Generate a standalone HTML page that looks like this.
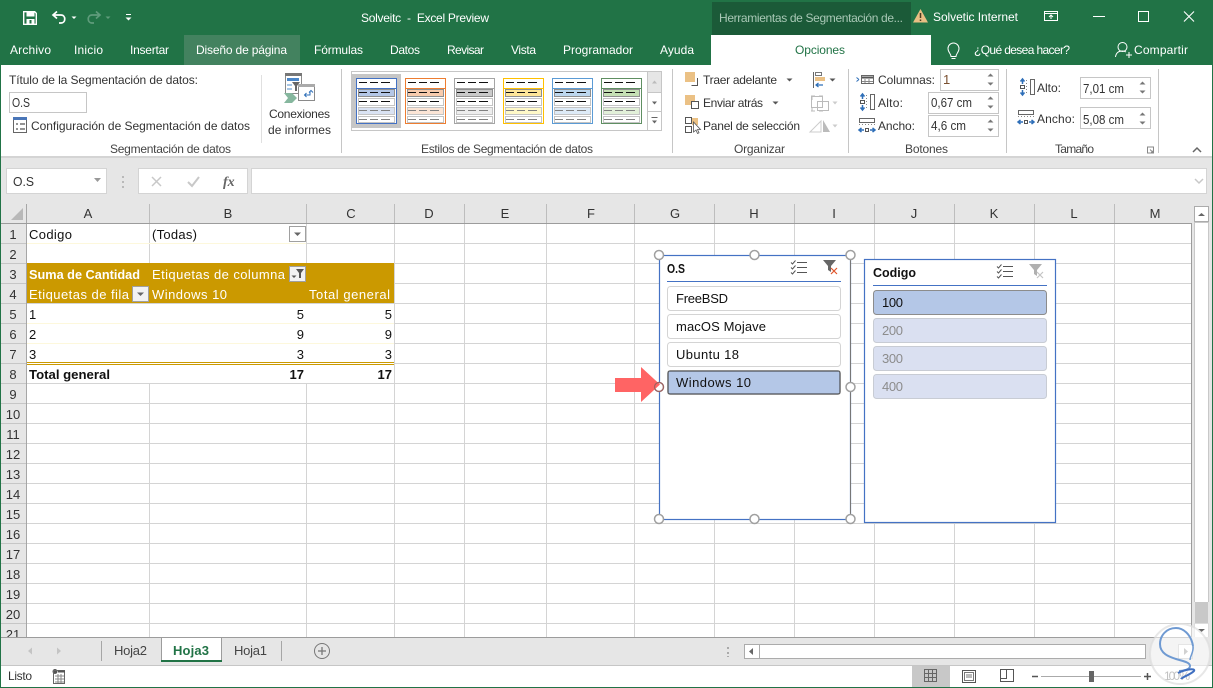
<!DOCTYPE html>
<html lang="es"><head><meta charset="utf-8"><title>Solveitc - Excel Preview</title>
<style>
html,body{margin:0;padding:0;background:#e6e6e6;overflow:hidden}
svg{display:block}
text{font-family:"Liberation Sans",sans-serif;font-size:12px;fill:#333}
.w text,text.w{fill:#fff}
.k text{fill:#111;font-size:13px}
.g text{fill:#444}
.c text{text-anchor:middle;fill:#333;font-size:13px}
.r text{text-anchor:end;fill:#111;font-size:13px}
.p text{fill:#fff;font-size:13px}
.m text{font-size:13px}
text.m{font-size:13px}
.b{font-weight:bold}
.s{fill:none;stroke:#555;stroke-width:1}
</style></head><body>
<svg xmlns="http://www.w3.org/2000/svg" width="1213" height="688" viewBox="0 0 1213 688">
<defs>
<g id="th">
<rect x="356.5" y="78.5" width="40" height="45" fill="#fff" style="stroke:var(--a)"/>
<path d="M357 88.5h39" style="stroke:var(--a)"/>
<rect x="358.5" y="89.5" width="36" height="7" style="fill:var(--b)" stroke="#8f8f8f"/>
<rect x="358.5" y="98.5" width="36" height="7" fill="#fff" stroke="#c4c4c4"/>
<rect x="358.5" y="107.5" width="36" height="7" style="fill:var(--c)" stroke="#c4c4c4"/>
<rect x="358.5" y="116.5" width="36" height="6" fill="#fff" stroke="#c4c4c4"/>
<path d="M359 82.5h8m3 0h8m3 0h9M359 92.5h8m3 0h8m3 0h9M359 101.5h8m3 0h8m3 0h9" stroke="#111"/>
<path d="M359 110.5h8m3 0h8m3 0h9M359 119.5h8m3 0h8m3 0h9" stroke="#808080"/>
</g>
<g id="ms"><path d="M0 2.5l1.5 1.5 3-3.5M0 7.5l1.5 1.5 3-3.5M0 12.5l1.5 1.5 3-3.5" fill="none" stroke="#555"/><path d="M6 2.5h10M6 7.5h10M6 12.5h10" stroke="#555"/></g>
</defs>

<!-- base -->
<rect width="1213" height="688" fill="#e6e6e6"/>
<rect width="1213" height="65" fill="#217346"/>
<rect x="712" y="2" width="199" height="33" fill="#1b5a38"/>
<rect x="184" y="35" width="116" height="30" fill="#43825f"/>
<rect x="711" y="35" width="220" height="30" fill="#fff"/>
<rect x="1" y="65" width="1211" height="91" fill="#fff"/>
<rect x="1" y="156" width="1211" height="2" fill="#d4d4d4"/>
<rect x="0" y="65" width="1" height="623" fill="#217346"/>
<rect x="1212" y="65" width="1" height="623" fill="#217346"/>

<!-- quick access -->
<path d="M23.7 11.7h11l1.6 1.6v11h-12.600z" fill="none" stroke="#fff" stroke-width="1.400"/>
<rect x="26.500" y="12" width="8" height="4.500" fill="#fff"/>
<rect x="26.500" y="19" width="8" height="5" fill="#fff"/>
<rect x="29.500" y="20" width="2" height="3.500" fill="#217346"/>
<path d="M57 11.500l-4 3.500 4 3.500M53 15h8c5 0 5 8 0 8h-2" fill="none" stroke="#fff" stroke-width="1.700"/>
<path d="M71.500 16.500h5l-2.500 2.500z" fill="#fff"/>
<path d="M96 11.500l4 3.500-4 3.500M100 15h-8c-5 0-5 8 0 8h2" fill="none" stroke="#5f9c7b" stroke-width="1.700"/>
<path d="M105.500 16.500h5l-2.500 2.500z" fill="#5f9c7b"/>
<path d="M126 14.500h5" stroke="#fff"/><path d="M125.500 17.500h6l-3 3z" fill="#fff"/>

<!-- title bar text -->
<text class="w" x="361" y="22" textLength="128">Solveitc&#160; -&#160; Excel Preview</text>
<text x="719" y="22" textLength="184" style="fill:#a9c8b6">Herramientas de Segmentación de...</text>
<path d="M920.500 9l7.500 13.500h-15z" fill="#e8bf84"/><path d="M920.500 13v5" stroke="#4a3a20" stroke-width="1.500"/><path d="M920.500 19.500v1.500" stroke="#4a3a20" stroke-width="1.500"/>
<text class="w" x="933" y="21" textLength="85">Solvetic Internet</text>
<rect x="1044.500" y="11.500" width="13" height="9" fill="none" stroke="#fff"/><path d="M1045 13.500h12" stroke="#fff"/><path d="M1051 19v-3.500m-2 1.500l2-2 2 2" fill="none" stroke="#fff"/>
<path d="M1093 16.500h12" stroke="#fff"/>
<rect x="1138.500" y="11.500" width="10" height="10" fill="none" stroke="#fff"/>
<path d="M1184 11.500l10 10m0-10l-10 10" stroke="#fff" stroke-width="1.100"/>

<!-- tabs -->
<g class="w">
<text x="10" y="54" textLength="41">Archivo</text>
<text x="74" y="54" textLength="29">Inicio</text>
<text x="130" y="54" textLength="39">Insertar</text>
<text x="196" y="54" textLength="91">Diseño de página</text>
<text x="314" y="54" textLength="49">Fórmulas</text>
<text x="390" y="54" textLength="30">Datos</text>
<text x="447" y="54" textLength="37">Revisar</text>
<text x="511" y="54" textLength="25">Vista</text>
<text x="563" y="54" textLength="70">Programador</text>
<text x="660" y="54" textLength="34">Ayuda</text>
<text x="974" y="54" textLength="96">¿Qué desea hacer?</text>
<text x="1134" y="54" textLength="54">Compartir</text>
</g>
<text x="795" y="54" textLength="50" style="fill:#217346">Opciones</text>
<path d="M951 56.500c0-3-3-4-3-8a5.500 5.500 0 0 1 11 0c0 4-3 5-3 8zM951.500 58.500h4" fill="none" stroke="#fff"/>
<circle cx="1122.500" cy="47" r="4.500" fill="none" stroke="#fff"/><path d="M1115.500 57c.5-4 3-6 7-6 1.500 0 2.500.3 3.500 1M1129 52v6m-3-3h6" fill="none" stroke="#fff"/>

<!-- ribbon: group 1 -->
<text x="9" y="84" textLength="189">Título de la Segmentación de datos:</text>
<rect x="9.500" y="92.500" width="77" height="20" fill="#fff" stroke="#c6c6c6"/>
<text x="12" y="107" textLength="18" lengthAdjust="spacingAndGlyphs" class="m">O.S</text>
<rect x="13.500" y="117.500" width="13" height="15" fill="#fff" stroke="#666"/><rect x="13" y="117" width="14" height="3" fill="#4a76b8"/>
<path d="M16 124h2M20 124h5M16 129h2M20 129h5" stroke="#555" stroke-width="1.200"/>
<text x="31" y="130" textLength="219">Configuración de Segmentación de datos</text>
<g class="g"><text x="110" y="153" textLength="121">Segmentación de datos</text></g>
<path d="M261.500 75v68" stroke="#e0e0e0"/>
<path d="M341.500 69v84M672.500 69v84M848.500 69v84M1006.500 69v84M1158.500 69v84" stroke="#c6c6c6"/>
<!-- conexiones -->
<rect x="285.500" y="73.500" width="16" height="20" fill="#fff" stroke="#8a8a8a"/><rect x="285" y="73" width="17" height="3" fill="#777"/>
<rect x="287" y="78" width="12" height="3" fill="#4a86c8"/><path d="M292 82h8l-3 4v5h-2v-5z" fill="#666"/><rect x="287" y="84" width="5" height="2" fill="#a8c6e4"/><rect x="287" y="88" width="5" height="2" fill="#a8c6e4"/>
<rect x="298.500" y="84.500" width="16" height="16" fill="#fff" stroke="#8a8a8a"/><rect x="298" y="84" width="17" height="3" fill="#aaa"/>
<path d="M310 91v4h-5m1.500-2l-2 2 2 2M309 92.500l2-2 2 2" fill="none" stroke="#2f6fb8"/>
<path d="M284 93h8l5 5-5 5h-8l4-5z" fill="#86b79e"/>
<text x="269" y="118" textLength="61">Conexiones</text>
<text x="268" y="134" textLength="63">de informes</text>

<!-- gallery -->
<rect x="351.500" y="71.500" width="310" height="59" fill="#fff" stroke="#c6c6c6"/>
<rect x="352" y="74" width="49" height="54" fill="#c6c6c6"/>
<use href="#th" style="--a:#4472c4;--b:#b4c7e7;--c:#dae3f3"/>
<use href="#th" x="49" style="--a:#ed7d31;--b:#f8cbad;--c:#fbe5d6"/>
<use href="#th" x="98" style="--a:#a5a5a5;--b:#c9c9c9;--c:#ededed"/>
<use href="#th" x="147" style="--a:#ffc000;--b:#ffe699;--c:#fff9c8"/>
<use href="#th" x="196" style="--a:#5b9bd5;--b:#bdd7ee;--c:#deebf7"/>
<use href="#th" x="245" style="--a:#5f8f62;--b:#c5e0b4;--c:#e2f0d9"/>
<rect x="647.500" y="71.500" width="14" height="21" fill="#e6e6e6" stroke="#c6c6c6"/>
<rect x="647.500" y="92.500" width="14" height="19" fill="#fff" stroke="#c6c6c6"/>
<rect x="647.500" y="111.500" width="14" height="19" fill="#fff" stroke="#c6c6c6"/>
<path d="M652 83.500h5l-2.500-3z" fill="#bbb"/><path d="M652 101.500h5l-2.500 3z" fill="#666"/><path d="M651.500 117.500h6" stroke="#666"/><path d="M652 120.500h5l-2.500 3z" fill="#666"/>
<g class="g"><text x="421" y="153" textLength="172">Estilos de Segmentación de datos</text></g>

<!-- organizar -->
<rect x="685" y="72" width="10" height="10" fill="#ebc185"/><path d="M696 78.500h-0M697.500 78v7.500h-6" fill="none" stroke="#555"/>
<text x="703" y="84" textLength="74">Traer adelante</text><path d="M786.500 78.500h6l-3 3z" fill="#555"/>
<rect x="685" y="95" width="10" height="10" fill="#ebc185"/><rect x="691.500" y="101.500" width="7" height="7" fill="#fff" stroke="#555"/>
<text x="703" y="107" textLength="60">Enviar atrás</text><path d="M772.500 101.500h6l-3 3z" fill="#555"/>
<rect x="685.500" y="117.500" width="6" height="6" fill="none" stroke="#555"/><rect x="685.500" y="126.500" width="6" height="6" fill="none" stroke="#555"/><rect x="692" y="118" width="6" height="7" fill="#ebc185"/>
<path d="M693.500 122v10l2.500-2 1.500 3.500 1.500-.7-1.500-3.300h3z" fill="#fff" stroke="#555" stroke-width=".8"/>
<text x="703" y="130" textLength="97">Panel de selección</text>
<g class="g"><text x="734" y="153" textLength="51">Organizar</text></g>
<path d="M813.500 72v16" stroke="#666"/><rect x="815.500" y="72.500" width="6" height="3" fill="#fff" stroke="#777"/><rect x="815" y="77" width="10" height="4" fill="#ebc185"/><path d="M823 85h-7m2.500-2l-2.500 2 2.500 2" fill="none" stroke="#2f6fb8" stroke-width="1.200"/>
<path d="M829.500 78.500h6l-3 3z" fill="#555"/>
<path d="M811 96h4m4 0h4M811 111h4m4 0h4M812 96v4m0 7v4M833 96" stroke="#bbb"/><rect x="811.500" y="96.500" width="11" height="11" fill="none" stroke="#bbb"/><rect x="817.500" y="101.500" width="11" height="9" fill="none" stroke="#bbb"/>
<path d="M832.500 101.500h5l-2.500 3z" fill="#ccc"/>
<path d="M810 132l11-11v11z" fill="none" stroke="#ccc"/><path d="M823 120l7 12h-7z" fill="#bbb"/><path d="M832.500 124.500h5l-2.500 3z" fill="#ccc"/>

<!-- botones -->
<path d="M859 79.500l-2.500-2m0 4l2.500-2M875 79.500" fill="none" stroke="#2f6fb8"/><rect x="861.500" y="75.500" width="12" height="8" fill="#fff" stroke="#666"/><path d="M862 77.500h11" stroke="#555" stroke-width="2"/><path d="M865 79v4M869 79v4M862 81.500h11" stroke="#888"/>
<text x="878" y="84" textLength="57">Columnas:</text>
<rect x="940.500" y="69.500" width="58" height="21" fill="#fff" stroke="#c6c6c6"/><text x="943" y="84" class="m" style="fill:#7a5030">1</text>
<rect x="928.500" y="92.500" width="70" height="21" fill="#fff" stroke="#c6c6c6"/><text x="931" y="107" textLength="41" lengthAdjust="spacingAndGlyphs" class="m">0,67 cm</text>
<rect x="928.500" y="115.500" width="70" height="21" fill="#fff" stroke="#c6c6c6"/><text x="931" y="130" textLength="35" lengthAdjust="spacingAndGlyphs" class="m">4,6 cm</text>
<path d="M987.500 76.500h6l-3-3zM987.500 82.500h6l-3 3zM987.500 99.500h6l-3-3zM987.500 105.500h6l-3 3zM987.500 122.500h6l-3-3zM987.500 128.500h6l-3 3z" fill="#777"/>
<g id="alto"><rect x="870.500" y="94.500" width="4" height="15" fill="#fff" stroke="#666"/><path d="M862.500 94v5m-2-2.500l2-2.500 2 2.500M862.500 110v-5m-2 2.500l2 2.500 2-2.500" fill="none" stroke="#2f6fb8" stroke-width="1.500"/><rect x="860.500" y="100.500" width="4" height="3" fill="none" stroke="#555"/><path d="M866.500 95v15" stroke="#888" stroke-dasharray="1 2"/></g>
<text x="878" y="107" textLength="25">Alto:</text>
<g id="ancho"><rect x="859.500" y="118.500" width="15" height="4" fill="#fff" stroke="#666"/><path d="M859 124.500h16" stroke="#888" stroke-dasharray="1 2"/><path d="M859 130h5m-2.500-2l-2.500 2 2.500 2M875 130h-5m2.500-2l2.500 2-2.500 2" fill="none" stroke="#2f6fb8" stroke-width="1.500"/><rect x="865.500" y="128.500" width="3" height="3" fill="none" stroke="#555"/></g>
<text x="878" y="130" textLength="37">Ancho:</text>
<g class="g"><text x="905" y="153" textLength="43">Botones</text></g>

<!-- tamano -->
<use href="#alto" x="160" y="-15"/>
<text x="1037" y="92" textLength="24">Alto:</text>
<rect x="1080.500" y="77.500" width="70" height="21" fill="#fff" stroke="#c6c6c6"/><text x="1083" y="93" textLength="41" lengthAdjust="spacingAndGlyphs" class="m">7,01 cm</text>
<use href="#ancho" x="159" y="-8"/>
<text x="1037" y="123" textLength="38">Ancho:</text>
<rect x="1080.500" y="107.500" width="70" height="21" fill="#fff" stroke="#c6c6c6"/><text x="1083" y="124" textLength="41" lengthAdjust="spacingAndGlyphs" class="m">5,08 cm</text>
<path d="M1139.500 84.500h6l-3-3zM1139.500 90.500h6l-3 3zM1139.500 115.500h6l-3-3zM1139.500 121.500h6l-3 3z" fill="#777"/>
<g class="g"><text x="1055" y="153" textLength="39">Tamaño</text></g>
<path d="M1147.500 147h6v6h-6zM1150 149.500l3 3m-2 0h2v-2" fill="none" stroke="#888"/>
<path d="M1193 152l4-4 4 4" fill="none" stroke="#666" stroke-width="1.500"/>

<!-- formula bar -->
<rect x="6.500" y="168.500" width="100" height="25" fill="#fff" stroke="#d4d4d4"/>
<text x="13" y="186" textLength="21" lengthAdjust="spacingAndGlyphs" class="m">O.S</text>
<path d="M94 178h7l-3.500 4z" fill="#999"/>
<path d="M123 176v2m0 3v2m0 3v2" stroke="#aaa" stroke-width="1.500"/>
<rect x="138.500" y="168.500" width="109" height="25" fill="#fff" stroke="#d4d4d4"/>
<rect x="251.500" y="168.500" width="955" height="25" fill="#fff" stroke="#d4d4d4"/>
<path d="M152 177l9 9m0-9l-9 9" stroke="#c8c8c8" stroke-width="1.500"/>
<path d="M188 182l4 4 7-9" fill="none" stroke="#c8c8c8" stroke-width="2"/>
<text x="223" y="186" style="font-family:'Liberation Serif',serif;font-style:italic;font-weight:bold;font-size:14px;fill:#666">fx</text>
<path d="M1195 179l4 4 4-4" fill="none" stroke="#c8c8c8" stroke-width="1.500"/>

<!-- grid -->
<rect x="27" y="224" width="1164" height="413" fill="#fff"/>
<path d="M11 220h12v-12z" fill="#b8b8b8"/>
<path d="M149.500 224V637M306.500 224V637M394.500 224V637M464.500 224V637M546.500 224V637M634.500 224V637M714.500 224V637M794.500 224V637M874.500 224V637M954.500 224V637M1034.500 224V637M1114.500 224V637" stroke="#d4d4d4"/>
<path d="M27 243.500H1191M27 263.500H1191M27 283.500H1191M27 303.500H1191M27 323.500H1191M27 343.500H1191M27 363.500H1191M27 383.500H1191M27 403.500H1191M27 423.500H1191M27 443.500H1191M27 463.500H1191M27 483.500H1191M27 503.500H1191M27 523.500H1191M27 543.500H1191M27 563.500H1191M27 583.500H1191M27 603.500H1191M27 623.500H1191" stroke="#d4d4d4"/>
<path d="M1 243.500H26M1 263.500H26M1 283.500H26M1 303.500H26M1 323.500H26M1 343.500H26M1 363.500H26M1 383.500H26M1 403.500H26M1 423.500H26M1 443.500H26M1 463.500H26M1 483.500H26M1 503.500H26M1 523.500H26M1 543.500H26M1 563.500H26M1 583.500H26M1 603.500H26M1 623.500H26" stroke="#c6c6c6"/>
<path d="M149.500 204V223M306.500 204V223M394.500 204V223M464.500 204V223M546.500 204V223M634.500 204V223M714.500 204V223M794.500 204V223M874.500 204V223M954.500 204V223M1034.500 204V223M1114.500 204V223" stroke="#bdbdbd"/>
<path d="M26.500 204V637" stroke="#a6a6a6"/>
<path d="M1 223.500H1191" stroke="#9c9c9c"/>
<path d="M1191.500 223V637" stroke="#9c9c9c"/>
<g class="c">
<text x="88" y="218">A</text><text x="228" y="218">B</text><text x="351" y="218">C</text><text x="429" y="218">D</text><text x="505" y="218">E</text><text x="591" y="218">F</text><text x="675" y="218">G</text><text x="754" y="218">H</text><text x="834" y="218">I</text><text x="914" y="218">J</text><text x="994" y="218">K</text><text x="1074" y="218">L</text><text x="1155" y="218">M</text>
<text x="13" y="239">1</text><text x="13" y="259">2</text><text x="13" y="279">3</text><text x="13" y="299">4</text><text x="13" y="319">5</text><text x="13" y="339">6</text><text x="13" y="359">7</text><text x="13" y="379">8</text><text x="13" y="399">9</text><text x="13" y="419">10</text><text x="13" y="439">11</text><text x="13" y="459">12</text><text x="13" y="479">13</text><text x="13" y="499">14</text><text x="13" y="519">15</text><text x="13" y="539">16</text><text x="13" y="559">17</text><text x="13" y="579">18</text><text x="13" y="599">19</text><text x="13" y="619">20</text><text x="13" y="639">21</text>
</g>
<!-- pivot -->
<path d="M27 243.500H306" stroke="#fdf8dc"/>
<rect x="27" y="304" width="367" height="79" fill="#fff"/>
<path d="M27 323.500H394M27 343.500H394" stroke="#fdf8dc"/>
<rect x="27" y="263" width="367" height="40" fill="#cb9900"/>
<path d="M27 362.500H394M27 364.500H394" stroke="#cb9900"/>
<g class="k">
<text x="29" y="239" textLength="43">Codigo</text>
<text x="152" y="239" textLength="45">(Todas)</text>
<text x="29" y="319">1</text><text x="29" y="339">2</text><text x="29" y="359">3</text>
<text x="29" y="379" class="b" textLength="81" lengthAdjust="spacingAndGlyphs">Total general</text>
</g>
<g class="r">
<text x="304" y="319">5</text><text x="392" y="319">5</text>
<text x="304" y="339">9</text><text x="392" y="339">9</text>
<text x="304" y="359">3</text><text x="392" y="359">3</text>
<text x="304" y="379" class="b">17</text><text x="392" y="379" class="b">17</text>
</g>
<g class="p">
<text x="29" y="279" class="b" textLength="111" lengthAdjust="spacingAndGlyphs">Suma de Cantidad</text>
<text x="152" y="279" textLength="133">Etiquetas de columna</text>
<text x="29" y="299" textLength="100">Etiquetas de fila</text>
<text x="152" y="299" textLength="75">Windows 10</text>
<text x="309" y="299" textLength="81">Total general</text>
</g>
<rect x="289.500" y="226.500" width="16" height="15" fill="#fff" stroke="#a0a0a0"/><path d="M294 232.500h7l-3.500 3.500z" fill="#666"/>
<rect x="289.500" y="266.500" width="16" height="15" fill="#f2f2f2" stroke="#a0a0a0"/><path d="M296 269h8l-3 4v5h-2v-5z" fill="#555"/><path d="M291.500 275.500h5l-2.500 2.500z" fill="#555"/>
<rect x="132.500" y="286.500" width="16" height="15" fill="#f2f2f2" stroke="#a0a0a0"/><path d="M137 292.500h7l-3.500 3.500z" fill="#666"/>

<!-- slicer O.S -->
<rect x="659.500" y="255.500" width="191" height="264" fill="#fff" stroke="#4472c4" stroke-width="1.200"/>
<path d="M850.500 256V519" stroke="#777"/>
<text x="667" y="273" class="b m" textLength="18" lengthAdjust="spacingAndGlyphs" style="fill:#111">O.S</text>
<path d="M667 281.500h174" stroke="#4472c4"/>
<use href="#ms" x="791" y="260"/>
<path d="M823 260h13l-5 6v6l-3-2v-4z" fill="#666"/><path d="M831 268l6 6m0-6l-6 6" stroke="#e0562c" stroke-width="1.200"/>
<g fill="#fff" stroke="#d4d4d4">
<rect x="667.500" y="286.500" width="173" height="24" rx="3"/>
<rect x="667.500" y="314.500" width="173" height="24" rx="3"/>
<rect x="667.500" y="342.500" width="173" height="24" rx="3"/>
</g>
<rect x="667.500" y="370.500" width="173" height="24" rx="3" fill="#b4c7e7" stroke="#8c8c8c"/>
<rect x="668.500" y="371.500" width="171" height="22" fill="none" stroke="#333" stroke-dasharray="1 1"/>
<g class="k">
<text x="676" y="303" textLength="52">FreeBSD</text>
<text x="676" y="331" textLength="90">macOS Mojave</text>
<text x="676" y="359" textLength="63">Ubuntu 18</text>
<text x="676" y="387" textLength="75">Windows 10</text>
</g>
<g fill="#fff" stroke="#a0a0a0" stroke-width="1.500">
<circle cx="659" cy="255" r="4.500"/><circle cx="754.500" cy="255" r="4.500"/><circle cx="850.500" cy="255" r="4.500"/>
<circle cx="659" cy="387" r="4.500"/><circle cx="850.500" cy="387" r="4.500"/>
<circle cx="659" cy="519" r="4.500"/><circle cx="754.500" cy="519" r="4.500"/><circle cx="850.500" cy="519" r="4.500"/>
</g>
<path d="M615 378h26v-11l19 17.500-19 17.500v-10h-26z" fill="#ff6464"/>
<circle cx="659" cy="387" r="4.500" fill="none" stroke="#a06060" stroke-width="1.200"/>

<!-- slicer Codigo -->
<rect x="864.500" y="259.500" width="191" height="263" fill="#fff" stroke="#4472c4" stroke-width="1.200"/>
<text x="873" y="277" class="b m" textLength="43" lengthAdjust="spacingAndGlyphs" style="fill:#111">Codigo</text>
<path d="M873 285.500h174" stroke="#4472c4"/>
<use href="#ms" x="997" y="264"/>
<path d="M1029 264h13l-5 6v6l-3-2v-4z" fill="#b0b0b0"/><path d="M1037 272l6 6m0-6l-6 6" stroke="#c4c4c4" stroke-width="1.200"/>
<rect x="873.500" y="290.500" width="173" height="24" rx="3" fill="#b4c7e7" stroke="#8c8c8c"/>
<g fill="#dae0f1" stroke="#c8ccd4">
<rect x="873.500" y="318.500" width="173" height="24" rx="3"/>
<rect x="873.500" y="346.500" width="173" height="24" rx="3"/>
<rect x="873.500" y="374.500" width="173" height="24" rx="3"/>
</g>
<text x="882" y="307" textLength="21" class="m" style="fill:#111">100</text>
<text x="882" y="335" textLength="21" class="m" style="fill:#8c8c8c">200</text>
<text x="882" y="363" textLength="21" class="m" style="fill:#8c8c8c">300</text>
<text x="882" y="391" textLength="21" class="m" style="fill:#8c8c8c">400</text>

<!-- v scrollbar -->
<rect x="1192" y="204" width="20" height="433" fill="#e6e6e6"/>
<rect x="1194.500" y="206.500" width="14" height="15" fill="#fff" stroke="#ababab"/>
<path d="M1198 216h7l-3.500-3z" fill="#666"/>
<rect x="1194" y="222" width="15" height="380" fill="#c8c8c8"/>
<rect x="1195" y="223" width="13" height="379" fill="#fff"/>
<rect x="1195" y="602" width="13" height="21" fill="#c8c8c8"/>
<rect x="1194.500" y="623.500" width="14" height="14" fill="#fff" stroke="#dcdcdc"/>
<path d="M1198 629h7l-3.500 3z" fill="#666"/>

<!-- sheet tabs -->
<rect x="1" y="637" width="1211" height="28" fill="#e6e6e6"/>
<path d="M1 637.500H1191" stroke="#9c9c9c"/>
<path d="M1 665.500H1212" stroke="#c6c6c6"/>
<rect x="1" y="666" width="1211" height="21" fill="#fff"/>
<rect x="0" y="687" width="1213" height="1" fill="#217346"/>
<path d="M32 647.500v7l-4-3.500zM57 647.500v7l4-3.500z" fill="#c4c4c4"/>
<path d="M101.500 641v20M281.500 641v20" stroke="#a6a6a6"/>
<rect x="161.500" y="637.500" width="60" height="23" fill="#fff" stroke="#9c9c9c"/>
<rect x="161" y="660" width="61" height="2" fill="#217346"/>
<text x="114" y="655" textLength="33" class="m" style="fill:#444">Hoja2</text>
<text x="173" y="655" class="b m" textLength="36" style="fill:#217346">Hoja3</text>
<text x="234" y="655" textLength="33" class="m" style="fill:#444">Hoja1</text>
<circle cx="322" cy="651" r="7.500" fill="none" stroke="#777"/><path d="M322 647v8m-4-4h8" stroke="#777" stroke-width="1.300"/>
<path d="M728 647v2m0 3v2m0 2v1" stroke="#aaa" stroke-width="2"/>
<rect x="744.500" y="644.500" width="15" height="14" fill="#fff" stroke="#ababab"/>
<rect x="759" y="644" width="387" height="15" fill="#ababab"/><rect x="760" y="645" width="385" height="13" fill="#fff"/>
<path d="M753 648v7l-4-3.500z" fill="#666"/>
<rect x="1178.500" y="644.500" width="14" height="14" fill="#fff" stroke="#c6c6c6"/><path d="M1184 648v7l4-3.500z" fill="#999"/>

<!-- status -->
<text x="8" y="680" textLength="24">Listo</text>
<circle cx="55" cy="671.500" r="2.500" fill="#555"/><rect x="53.500" y="670.500" width="11" height="13" fill="none" stroke="#666"/><path d="M58 671.500h7" stroke="#555" stroke-width="2"/><path d="M55 676h9M55 679h9M55 682h9M58 674v9M61 674v9" stroke="#888"/>
<rect x="912" y="666" width="38" height="21" fill="#c8c8c8"/>
<path d="M924.500 669.500h12v12h-12zM924.500 673.500h12M924.500 677.500h12M928.500 669.500v12M932.500 669.500v12" fill="none" stroke="#666"/>
<rect x="962.500" y="670.500" width="13" height="12" fill="none" stroke="#555"/><rect x="964.500" y="672.500" width="9" height="8" fill="none" stroke="#777"/><path d="M966 675h6M966 677h6" stroke="#777"/>
<path d="M1000.500 669.500h13v12h-13zM1000.500 678.500h6v-9M1006.500 669.500" fill="none" stroke="#555"/>
<path d="M1032 676.500h6M1144 676.500h7M1147.500 673v7" stroke="#555" stroke-width="1.500"/>
<path d="M1041 676.500h100" stroke="#aaa"/>
<rect x="1089" y="671" width="5" height="11" fill="#666"/>
<text x="1164" y="680" textLength="26" style="fill:#777">100 %</text>

<!-- watermark -->
<circle cx="1180" cy="654" r="30" fill="#fff" fill-opacity=".55" stroke="#ddd" stroke-opacity=".7" stroke-width="2"/>
<path d="M1193 646C1191 634 1183 628 1176 628C1166 628 1160 636 1160 644C1160 654 1170 657 1176 659C1182 661 1190 662 1190 666C1190 670 1182 671 1179 671" fill="none" stroke="#6f9ad2" stroke-width="2"/>
<path d="M1193 646C1194 652 1190 656 1190 660" fill="none" stroke="#6f9ad2" stroke-width="1.500"/>
<path d="M1178 673C1186 669 1196 668 1194 671C1190 675 1182 677 1181 679" fill="none" stroke="#3f6fc0" stroke-width="2"/>
</svg>
</body></html>
